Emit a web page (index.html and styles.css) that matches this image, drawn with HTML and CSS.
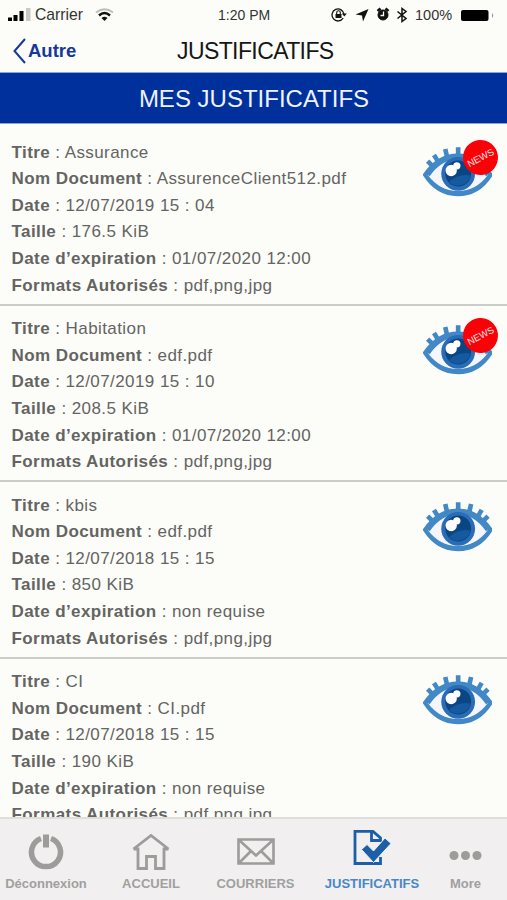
FILE: index.html
```html
<!DOCTYPE html>
<html lang="fr">
<head>
<meta charset="utf-8">
<title>Justificatifs</title>
<link rel="stylesheet" href="styles.css">
</head>
<body>
<svg class="defs" width="0" height="0" aria-hidden="true">
  <symbol id="eye" viewBox="40 60 208 152">
    <g stroke="#4288c6" stroke-width="14">
      <path d="M54 105l18 18M73 86l15 24M107 68l6 26M146 63v28M185 68l-6 26M217 86l-14 24M236 105l-18 18"/>
    </g>
    <path d="M49 146Q88 90 145 90T241 146Q205 202 145 202T49 146Z" fill="#f4f6ff" stroke="#4288c6" stroke-width="17"/>
    <path d="M54 146Q90 100 145 98Q200 100 236 146Q200 195 145 195Q90 195 54 146Z" fill="#f4f6ff"/>
    <path d="M54 146Q90 94 145 91Q200 94 236 146" fill="none" stroke="#4288c6" stroke-width="15"/>
    <circle cx="146" cy="143" r="51" fill="#2a6cb5"/>
    <circle cx="146" cy="142" r="39" fill="#0a4584"/>
    <path d="M118 168A39 39 0 0 0 183 148Q145 142 118 168Z" fill="#155a9e"/>
    <circle cx="125" cy="133" r="17" fill="#fff"/>
    <circle cx="142" cy="119" r="11" fill="#fff"/>
  </symbol>
</svg>
<div class="app">
  <header class="status">
    <svg class="signal" width="23" height="14" viewBox="0 0 23 14"><path d="M0 9.500h4V13H0zM5.500 7h4v6h-4zM11.500 3h4v10h-4z"/><path d="M18 0h4.500v13H18z" fill="#c9c9c6"/></svg>
    <span class="carrier">Carrier</span>
    <svg class="wifi" width="19" height="14" viewBox="0 0 19 14" fill="none"><path d="M1 4.500Q9.500-2 18 4.500" stroke="#bdbdba" stroke-width="2"/><path d="M4 7.500Q9.500 2.500 15 7.500" stroke="#111" stroke-width="2.500"/><path d="M6.500 10Q9.500 7.500 12.500 10L9.500 13Z" fill="#111"/></svg>
    <span class="clock">1:20 PM</span>
    <svg class="indicators" width="79" height="16" viewBox="0 0 79 16" fill="none" stroke="#111">
      <path d="M12.200 11A6 6 0 1 1 13 7.500" stroke-width="1.300"/><path d="M10.800 6.500h5l-2.500 3z" fill="#111" stroke="none"/><path d="M4.500 7h6v4h-6z" fill="#111" stroke="none"/><path d="M5.700 7V5.500a1.800 1.800 0 0 1 3.600 0V7" stroke-width="1.100"/>
      <path d="M24.500 7.500L37.500 2 32 14.500 31 8.500z" fill="#111" stroke="none"/>
      <circle cx="52" cy="8" r="5" fill="#111"/><path d="M46.500 4l3-2.500M57.500 4l-3-2.500" stroke-width="2.500"/><path d="M52.500 4.500V8.500h-3" stroke="#fff" stroke-width="1.300"/>
      <path d="M66.500 4.500l8.500 7-4 3V1.500l4 3-8.500 7" stroke-width="1.500"/>
    </svg>
    <span class="percent">100%</span>
    <svg class="battery" width="34" height="11" viewBox="0 0 34 11"><rect width="27.500" height="11" rx="2"/><path d="M31 3q2.500 2.500 0 5z" fill="#999"/></svg>
  </header>
  <nav class="navbar">
    <a class="back"><svg width="13" height="26" viewBox="0 0 13 26"><path d="M12 1L1.500 13 12 25" fill="none" stroke="#16379b" stroke-width="2"/></svg><span>Autre</span></a>
    <h1>JUSTIFICATIFS</h1>
  </nav>
  <h2 class="banner"><span>MES JUSTIFICATIFS</span></h2>
  <main class="list">
    <article class="doc first">
      <div class="info">
        <p><b>Titre</b> : Assurance</p><p><b>Nom Document</b> : AssurenceClient512.pdf</p><p><b>Date</b> : 12/07/2019 15 : 04</p><p><b>Taille</b> : 176.5 KiB</p><p><b>Date d’expiration</b> : 01/07/2020 12:00</p><p><b>Formats Autorisés</b> : pdf,png,jpg</p>
      </div>
      <div class="view"><svg><use href="#eye"/></svg><span class="badge">NEWS</span></div>
    </article>
    <article class="doc">
      <div class="info">
        <p><b>Titre</b> : Habitation</p><p><b>Nom Document</b> : edf.pdf</p><p><b>Date</b> : 12/07/2019 15 : 10</p><p><b>Taille</b> : 208.5 KiB</p><p><b>Date d’expiration</b> : 01/07/2020 12:00</p><p><b>Formats Autorisés</b> : pdf,png,jpg</p>
      </div>
      <div class="view"><svg><use href="#eye"/></svg><span class="badge">NEWS</span></div>
    </article>
    <article class="doc">
      <div class="info">
        <p><b>Titre</b> : kbis</p><p><b>Nom Document</b> : edf.pdf</p><p><b>Date</b> : 12/07/2018 15 : 15</p><p><b>Taille</b> : 850 KiB</p><p><b>Date d’expiration</b> : non requise</p><p><b>Formats Autorisés</b> : pdf,png,jpg</p>
      </div>
      <div class="view"><svg><use href="#eye"/></svg></div>
    </article>
    <article class="doc last">
      <div class="info">
        <p><b>Titre</b> : CI</p><p><b>Nom Document</b> : CI.pdf</p><p><b>Date</b> : 12/07/2018 15 : 15</p><p><b>Taille</b> : 190 KiB</p><p><b>Date d’expiration</b> : non requise</p><p><b>Formats Autorisés</b> : pdf,png,jpg</p>
      </div>
      <div class="view"><svg><use href="#eye"/></svg></div>
    </article>
  </main>
  <footer class="tabs">
    <a class="tab t1"><svg width="38" height="40" viewBox="0 0 38 40"><path d="M14 8.500A14.500 14.500 0 1 0 24 8.500" fill="none" stroke="#9c9c9a" stroke-width="5.500"/><path d="M16 4.500h6v13h-6z" fill="#9c9c9a"/></svg><span>Déconnexion</span></a>
    <a class="tab t2"><svg width="38" height="40" viewBox="0 0 38 40"><path d="M1.500 19L19 5.500 36.500 19M1.500 19H6V38.500H14.500V26.500H23.500V38.500H32V19H36.500" fill="none" stroke="#9c9c9a" stroke-width="2.800"/></svg><span>ACCUEIL</span></a>
    <a class="tab t3"><svg width="38" height="40" viewBox="0 0 38 40"><path d="M1.500 9.500H36.500V33.500H1.500ZM1.500 9.500L19 25.500 36.500 9.500M2 33L14 21M36 33L24 21" fill="none" stroke="#9c9c9a" stroke-width="2.600"/></svg><span>COURRIERS</span></a>
    <a class="tab t4"><svg width="38" height="40" viewBox="0 0 38 40"><path d="M19 1.400H2V33.500H27.500V27M27.500 10.500V8L20 1.400H18.500V10.500Z" fill="none" stroke="#1d5fa6" stroke-width="2.800"/><path d="M8.500 19.500l5.500-5 6.500 6.500L32 8l6 5.500L20.500 32.500z" fill="#1d5fa6" stroke="#f1efef" stroke-width="1"/></svg><span>JUSTIFICATIFS</span></a>
    <a class="tab t5"><svg width="38" height="40" viewBox="0 0 38 40" fill="#9c9c9a"><circle cx="7" cy="25.500" r="4.500"/><circle cx="18.500" cy="25.500" r="4.500"/><circle cx="30" cy="25.500" r="4.500"/></svg><span>More</span></a>
  </footer>
</div>
</body>
</html>
```
FILE: styles.css
```css
* { box-sizing: border-box; }
body, h1, h2, p { margin: 0; }
body { background: #fcfdf8; font-family: "Liberation Sans", Arial, sans-serif; }
.defs { position: absolute; }
.app { width: 507px; height: 900px; display: flex; flex-direction: column; overflow: hidden; }
.status { height: 30px; display: flex; align-items: center; padding-left: 8px; font-size: 15px; color: #333; white-space: nowrap; }
.status svg { flex: none; }
.carrier { width: 49px; margin-left: 4px; font-size: 15.700px; }
.wifi { margin-left: 11px; }
.clock { margin-left: 104px; width: 52px; font-size: 14px; }
.indicators { margin-left: 61px; }
.percent { margin-left: 5px; width: 37px; font-size: 14.500px; }
.battery { margin-left: 9px; }
.navbar { height: 42px; display: grid; grid-template-columns: 177px 1fr; align-items: center; }
.back { display: flex; align-items: center; gap: 2px; padding-left: 13px; color: #16379b; font-size: 18.500px; font-weight: bold; }
h1 { font-size: 23px; line-height: 26px; font-weight: 400; letter-spacing: -.6px; color: #161616; }
.banner { flex: none; height: 52px; display: flex; align-items: center; justify-content: center; background: #00309c; border-top: 1px solid #8ba4dc; border-bottom: 1px solid #8ba4dc; color: #eef3ff; font-size: 24px; font-weight: 400; }
.banner span { padding: 2px 0 0 1px; }
.list { flex: 1; min-height: 0; overflow: hidden; }
.doc { height: 176.5px; display: flex; justify-content: space-between; padding: 10.500px 14px 0 11.500px; border-bottom: 2px solid #cbccc8; }
.doc.first { height: 181.500px; padding-top: 15.500px; }
.info { color: #646463; font-size: 17px; letter-spacing: .42px; }
.info p { line-height: 26.650px; white-space: nowrap; }
.view { position: relative; width: 69px; height: 51px; margin: 8px 1px 0 0; }
.first .view { margin-top: 6px; }
.last .view { margin-top: 5px; }
.view svg { display: block; width: 69px; height: 51px; }
.badge { position: absolute; left: 40px; top: -6px; width: 35px; height: 35px; border-radius: 50%; background: #fb0007; color: #ffe4e4; font-size: 9.500px; line-height: 35px; text-align: center; transform: rotate(-28deg); }
.tabs { flex: none; height: 83px; display: flex; background: #f1efef; border-top: 2px solid #dededb; }
.tab { display: flex; flex-direction: column; align-items: center; padding-top: 11px; color: #a0a09f; font-size: 13px; font-weight: bold; }
.tab span { line-height: 16px; margin-top: 6px; white-space: nowrap; }
.t1 { width: 92px; }
.t2 { width: 118px; }
.t3 { width: 91px; }
.t4 { width: 142px; color: #4a87c6; }
.t5 { width: 45px; }
```
